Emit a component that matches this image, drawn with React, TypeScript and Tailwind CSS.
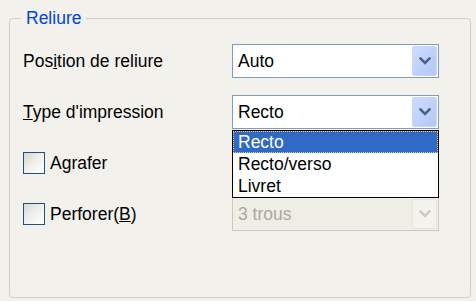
import React from 'react';

const FONT = { fontFamily: '"Liberation Sans", Arial, sans-serif' };

const Chevron = ({ color }: { color: string }) => (
  <svg width="12" height="8" viewBox="0 0 12 8">
    <path d="M1.5 1.5 L6 6 L10.5 1.5" fill="none" stroke={color} strokeWidth="2.6" strokeLinecap="square" />
  </svg>
);

const Select = ({ value, disabled }: { value: string; disabled?: boolean }) => (
  <div
    className={`flex h-[34px] w-[207px] border ${
      disabled ? 'border-[#cbc9bd] bg-[#efeee6]' : 'border-[#7f9db9] bg-white'
    }`}
  >
    <span
      className={`flex flex-1 items-center pl-[5px] ${disabled ? 'text-[#aca899]' : 'text-black'}`}
    >
      {value}
    </span>
    <div
      className={`m-[1px] flex w-[25px] items-center justify-center rounded-[2px] border ${
        disabled
          ? 'border-[#e6e4dc] bg-[#f3f2ed]'
          : 'border-[#c6d6fb] bg-gradient-to-br from-[#cfdcfd] to-[#b2c6f6]'
      }`}
    >
      <Chevron color={disabled ? '#cdcbc2' : '#4d6185'} />
    </div>
  </div>
);

const Checkbox = ({ children }: { children: React.ReactNode }) => (
  <label className="flex items-center gap-[5px]">
    <span className="h-[22px] w-[22px] border border-[#1c5180] bg-gradient-to-br from-[#d8d8d2] via-[#f0f0ec] to-white" />
    <span>{children}</span>
  </label>
);

export default function App() {
  return (
    <div
      className="h-[301px] w-[476px] bg-[#f2f1ec] pb-[3px] pl-[9px] pr-[5px] pt-[8px] text-[17.5px] leading-[20px] text-black"
      style={FONT}
    >
      <fieldset className="h-full rounded-[4px] border border-[#d3d0c2]">
        <legend className="ml-[11px] px-[5px] text-[#0046d5]">Reliure</legend>
        <div className="grid grid-cols-[209px_207px] items-center gap-y-[17px] pl-[13px] pt-[16px]">
          <span>
            Pos<u>i</u>tion de reliure
          </span>
          <Select value="Auto" />

          <span>
            <u>T</u>ype d'impression
          </span>
          <div className="relative">
            <Select value="Recto" />
            <ul className="absolute left-0 top-[35px] z-10 w-[207px] border border-black bg-white">
              <li className="flex h-[22px] items-center border border-dotted border-[#d8cf8a] bg-[#316ac5] pl-[4px] text-white">
                Recto
              </li>
              <li className="flex h-[22px] items-center pl-[5px]">Recto/verso</li>
              <li className="flex h-[22px] items-center pl-[5px]">Livret</li>
            </ul>
          </div>

          <div className="flex h-[34px] items-center">
            <Checkbox>
              A<u>g</u>rafer
            </Checkbox>
          </div>
          <div />

          <Checkbox>
            Perforer(<u>B</u>)
          </Checkbox>
          <Select value="3 trous" disabled />
        </div>
      </fieldset>
    </div>
  );
}
